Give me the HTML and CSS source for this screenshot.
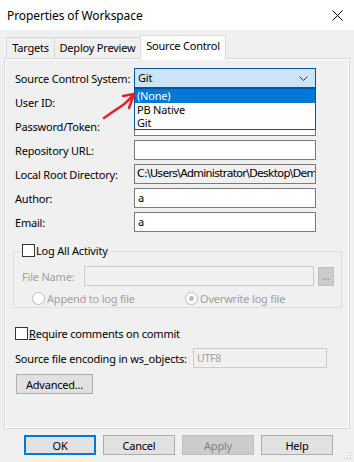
FILE: index.html
```html
<!DOCTYPE html>
<html lang="en">
<head>
    <meta charset="UTF-8">
    <meta name="viewport" content="width=device-width, initial-scale=1.0">
    <title>Properties of Workspace</title>
    <link rel="stylesheet" href="styles.css">
</head>
<body>
    <div class="window">
        <div class="titlebar">
            <span class="title">Properties of Workspace</span>
            <svg class="close" width="11" height="11" viewBox="0 0 11 11">
                <path d="M0.5 0.5 L10.5 10.5 M10.5 0.5 L0.5 10.5" stroke="#000" stroke-width="1"/>
            </svg>
        </div>

        <div class="tabs">
            <div class="tab tab-targets">Targets</div>
            <div class="tab tab-deploy">Deploy Preview</div>
            <div class="tab active">Source Control</div>
        </div>

        <div class="panel">
            <div class="form">
                <label>Source Control System:</label>
                <div class="select">
                    <span>Git</span>
                    <svg class="chevron" width="9" height="5" viewBox="0 0 9 5">
                        <path d="M0.5 0.5 L4.5 4.5 L8.5 0.5" stroke="#333" fill="none" stroke-width="1"/>
                    </svg>
                    <div class="droplist">
                        <div class="item selected">(None)</div>
                        <div class="item">PB Native</div>
                        <div class="item">Git</div>
                    </div>
                </div>

                <label>User ID:</label>
                <div class="field"></div>

                <label>Password/Token:</label>
                <div class="field"></div>

                <label>Repository URL:</label>
                <div class="field"></div>

                <label>Local Root Directory:</label>
                <div class="field readonly">C:\Users\Administrator\Desktop\Dem</div>

                <label>Author:</label>
                <div class="field">a</div>

                <label>Email:</label>
                <div class="field">a</div>
            </div>

            <fieldset class="group">
                <legend><span class="check"></span>Lo<u>g</u> All Activity</legend>
                <div class="file-row">
                    <span class="dim file-label">File Name:</span>
                    <div class="field disabled wide"></div>
                    <div class="browse">...</div>
                </div>
                <div class="radio-row">
                    <div class="radio-opt"><span class="radio"></span><span class="dim">Append to log file</span></div>
                    <div class="radio-opt"><span class="radio on"></span><span class="dim">Overwrite log file</span></div>
                </div>
            </fieldset>

            <div class="check-row"><span class="check"></span><span><u>R</u>equire comments on commit</span></div>

            <div class="enc-row">
                <span>Source file encoding in ws_objects:</span>
                <div class="field disabled enc">UTF8</div>
            </div>

            <button class="btn advanced">Advanced...</button>
        </div>

        <div class="buttons">
            <button class="btn default">OK</button>
            <button class="btn">Cancel</button>
            <button class="btn" disabled>Apply</button>
            <button class="btn">Help</button>
            <svg class="grip" width="9" height="9" viewBox="0 0 9 9">
                <rect x="7" y="1" width="1" height="1" fill="#bbb"/>
                <rect x="4" y="4" width="1" height="1" fill="#bbb"/>
                <rect x="7" y="4" width="1" height="1" fill="#bbb"/>
                <rect x="1" y="7" width="1" height="1" fill="#bbb"/>
                <rect x="4" y="7" width="1" height="1" fill="#bbb"/>
                <rect x="7" y="7" width="1" height="1" fill="#bbb"/>
            </svg>
        </div>

        <!-- hand-drawn annotation on top of the dialog -->
        <svg class="arrow" width="40" height="30" viewBox="0 0 40 30">
            <path d="M5 27 C12 22, 18 18, 24 14 C28 11, 31 8, 35 3" stroke="#ec1c24" stroke-width="2.5" fill="none" stroke-linecap="round"/>
            <path d="M24 5 L35 3 L30 17" stroke="#ec1c24" stroke-width="2.5" fill="none" stroke-linecap="round" stroke-linejoin="round"/>
        </svg>
    </div>
</body>
</html>
```

FILE: styles.css
```css
body {
    margin: 0;
    font-family: "Noto Sans", "Open Sans", sans-serif;
    font-size: 11px;
    letter-spacing: -0.2px;
    color: #000;
    background-color: #f0f0f0;
}

.window {
    position: relative;
    width: 354px;
    height: 462px;
    overflow: hidden;
    background-color: #f0f0f0;
}

.titlebar {
    height: 30px;
    background-color: #fff;
    display: flex;
    align-items: center;
    justify-content: space-between;
    padding: 0 11px 0 7px;
    font-size: 12px;
    letter-spacing: -0.1px;
}

.close {
    margin-top: 1px;
}

.tabs {
    display: flex;
    align-items: flex-end;
    height: 23px;
    margin-top: 5px;
    padding-left: 6px;
    position: relative;
    z-index: 2;
}

.tab {
    height: 21px;
    box-sizing: border-box;
    border: 1px solid #d9d9d9;
    border-bottom: none;
    border-right: none;
    background-color: #f0f0f0;
    text-align: center;
    line-height: 20px;
    white-space: nowrap;
}

.tab-targets {
    width: 48px;
}

.tab-deploy {
    width: 86px;
}

.tab.active {
    width: 86px;
    height: 24px;
    margin-bottom: -1px;
    background-color: #fff;
    border-right: 1px solid #d9d9d9;
    line-height: 20px;
}

.panel {
    margin-left: 4px;
    width: 346px;
    height: 371px;
    box-sizing: border-box;
    border: 1px solid #d9d9d9;
    box-shadow: inset 0 0 0 1px #fff;
    padding: 9px 0 0 3px;
}

.form {
    display: grid;
    grid-template-columns: 119px 182px;
    grid-auto-rows: 20px;
    row-gap: 4px;
    margin-left: 7px;
    align-items: center;
}

.form label {
    white-space: nowrap;
}

.field {
    height: 20px;
    box-sizing: border-box;
    border: 1px solid #7a7a7a;
    background-color: #fff;
    padding: 0 3px;
    line-height: 18px;
    white-space: nowrap;
    overflow: hidden;
}

.field.readonly {
    background-color: #f0f0f0;
    font-family: "DejaVu Sans", sans-serif;
    font-size: 11px;
    letter-spacing: -0.7px;
    padding: 0 2px;
}

.field.disabled {
    background-color: #f0f0f0;
    border-color: #cccccc;
    color: #a0a0a0;
}

.select {
    position: relative;
    height: 20px;
    box-sizing: border-box;
    border: 1px solid #005499;
    background-color: #cce4f7;
    padding: 0 3px;
    line-height: 18px;
    display: flex;
    justify-content: space-between;
    align-items: center;
    z-index: 3;
}

.chevron {
    margin-right: 4px;
}

.droplist {
    position: absolute;
    top: 19px;
    left: -1px;
    width: 182px;
    height: 42px;
    box-sizing: border-box;
    border: 1px solid #005499;
    background-color: #fff;
}

.item {
    height: 13px;
    line-height: 13px;
    padding-left: 2px;
}

.item.selected {
    height: 14px;
    line-height: 14px;
    background-color: #0078d7;
    color: #fff;
}

.group {
    margin: 12px 0 0 5px;
    width: 329px;
    height: 64px;
    box-sizing: border-box;
    border: 1px solid #dcdcdc;
    padding: 0 0 0 16px;
    white-space: nowrap;
}

.group legend {
    padding: 0 1px;
    margin-left: -9px;
    line-height: 14px;
}

.check {
    display: inline-block;
    vertical-align: -2px;
    width: 13px;
    height: 13px;
    box-sizing: border-box;
    border: 1px solid #333;
    background-color: #fff;
    margin-right: 1px;
}

.file-row {
    display: flex;
    align-items: center;
    gap: 4px;
    margin-top: 8px;
    margin-left: -8px;
}

.file-label {
    width: 58px;
}

.field.wide {
    width: 230px;
    flex: none;
}

.browse {
    width: 16px;
    height: 19px;
    flex: none;
    box-sizing: border-box;
    background-color: #cccccc;
    border: 1px solid #bfbfbf;
    color: #8c8c8c;
    font-size: 10px;
    text-align: center;
    line-height: 16px;
}

.dim {
    color: #a0a0a0;
}

.radio-row {
    display: flex;
    margin: 5px 0 0 2px;
}

.radio-opt {
    display: flex;
    align-items: center;
    gap: 2px;
    width: 153px;
}

.radio {
    width: 13px;
    height: 13px;
    flex: none;
    box-sizing: border-box;
    border: 1px solid #bcbcbc;
    border-radius: 50%;
    background-color: #fff;
    position: relative;
}

.radio.on::after {
    content: "";
    position: absolute;
    left: 3px;
    top: 3px;
    width: 5px;
    height: 5px;
    border-radius: 50%;
    background-color: #bcbcbc;
}

.check-row {
    display: flex;
    align-items: center;
    margin: 18px 0 0 7px;
    height: 14px;
    white-space: nowrap;
}

.enc-row {
    display: flex;
    align-items: center;
    justify-content: space-between;
    width: 312px;
    margin: 8px 0 0 7px;
    white-space: nowrap;
}

.field.enc {
    width: 134px;
    font-size: 10.5px;
}

.btn {
    font-family: "Noto Sans", "Open Sans", sans-serif;
    font-size: 11px;
    letter-spacing: -0.2px;
    color: #000;
    background-color: #e1e1e1;
    border: 1px solid #adadad;
    height: 20px;
    width: 72px;
    padding: 0;
    box-sizing: border-box;
}

.btn:disabled {
    background-color: #cccccc;
    border-color: #bfbfbf;
    color: #838383;
}

.btn.default {
    border: 2px solid #0078d7;
}

.advanced {
    width: 77px;
    margin: 6px 0 0 8px;
    display: block;
}

.buttons {
    display: flex;
    gap: 7px;
    padding-left: 24px;
    margin-top: 6px;
    position: relative;
    height: 26px;
}

.grip {
    position: absolute;
    right: 2px;
    bottom: 1px;
}

.arrow {
    position: absolute;
    left: 99px;
    top: 91px;
    z-index: 5;
}
```
